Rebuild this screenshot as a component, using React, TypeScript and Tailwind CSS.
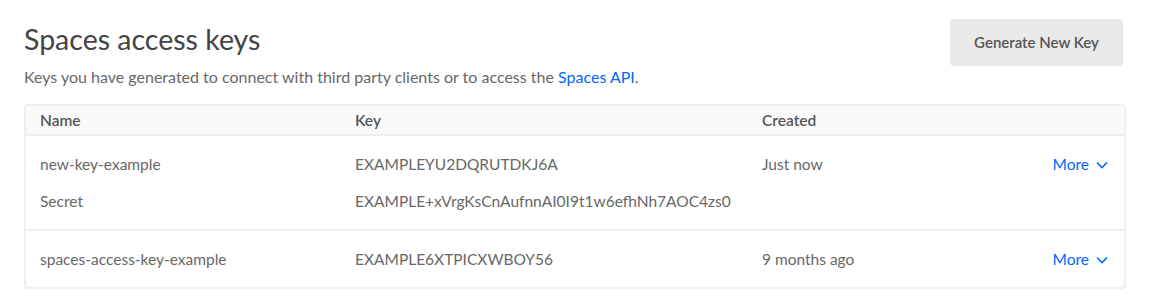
import React from 'react';

type KeyRow = {
  name: string;
  key: string;
  created: string;
  secret?: string;
};

const KEYS: KeyRow[] = [
  {
    name: 'new-key-example',
    key: 'EXAMPLEYU2DQRUTDKJ6A',
    created: 'Just now',
    secret: 'EXAMPLE+xVrgKsCnAufnnAI0I9t1w6efhNh7AOC4zs0',
  },
  {
    name: 'spaces-access-key-example',
    key: 'EXAMPLE6XTPICXWBOY56',
    created: '9 months ago',
  },
];

const Chevron = () => (
  <svg width="12" height="8" viewBox="0 0 12 8" fill="none" className="ml-[7px] mt-[1px]">
    <path d="M1 1.5l5 5 5-5" stroke="#0069ff" strokeWidth="1.6" />
  </svg>
);

export default function App() {
  return (
    <div className="bg-white min-h-[307px] px-6 pt-[19px] font-['Lato','Liberation_Sans',sans-serif] text-[#676767]">
      <div className="flex justify-between items-start">
        <div className="pt-[3px]">
          <h1 className="text-[28.5px] leading-[34px] text-[#444]">Spaces access keys</h1>
          <p className="mt-[11px] text-[16px] leading-[20px]">
            Keys you have generated to connect with third party clients or to access the{' '}
            <a className="text-[#0069ff]">Spaces API</a>.
          </p>
        </div>
        <button className="mr-[3px] w-[173px] h-[47px] rounded bg-[#e9e9e9] text-[15px] text-[#555] font-semibold">
          Generate New Key
        </button>
      </div>

      <div className="mt-[17px] border-2 border-[#efefef] rounded">
        <div className="grid grid-cols-[315px_407px_1fr_auto] bg-[#fafafa] border-b-2 border-[#efefef] h-[30px] items-center text-[15.5px] font-semibold text-[#555] pl-[14px] pt-[1px]">
          <div>Name</div>
          <div>Key</div>
          <div>Created</div>
          <div />
        </div>
        {KEYS.map((k, i) => (
          <div
            key={k.name}
            className={`grid grid-cols-[315px_407px_1fr_auto] pl-[14px] pr-[16px] pt-[18px] pb-[18px] gap-y-[17px] text-[15.5px] leading-[20px] ${i > 0 ? 'border-t-2 border-[#efefef]' : ''}`}
          >
            <div>{k.name}</div>
            <div>{k.key}</div>
            <div>{k.created}</div>
            <div className="flex items-center text-[#0069ff]">
              More
              <Chevron />
            </div>
            {k.secret && (
              <>
                <div>Secret</div>
                <div className="col-span-3">{k.secret}</div>
              </>
            )}
          </div>
        ))}
      </div>
    </div>
  );
}
